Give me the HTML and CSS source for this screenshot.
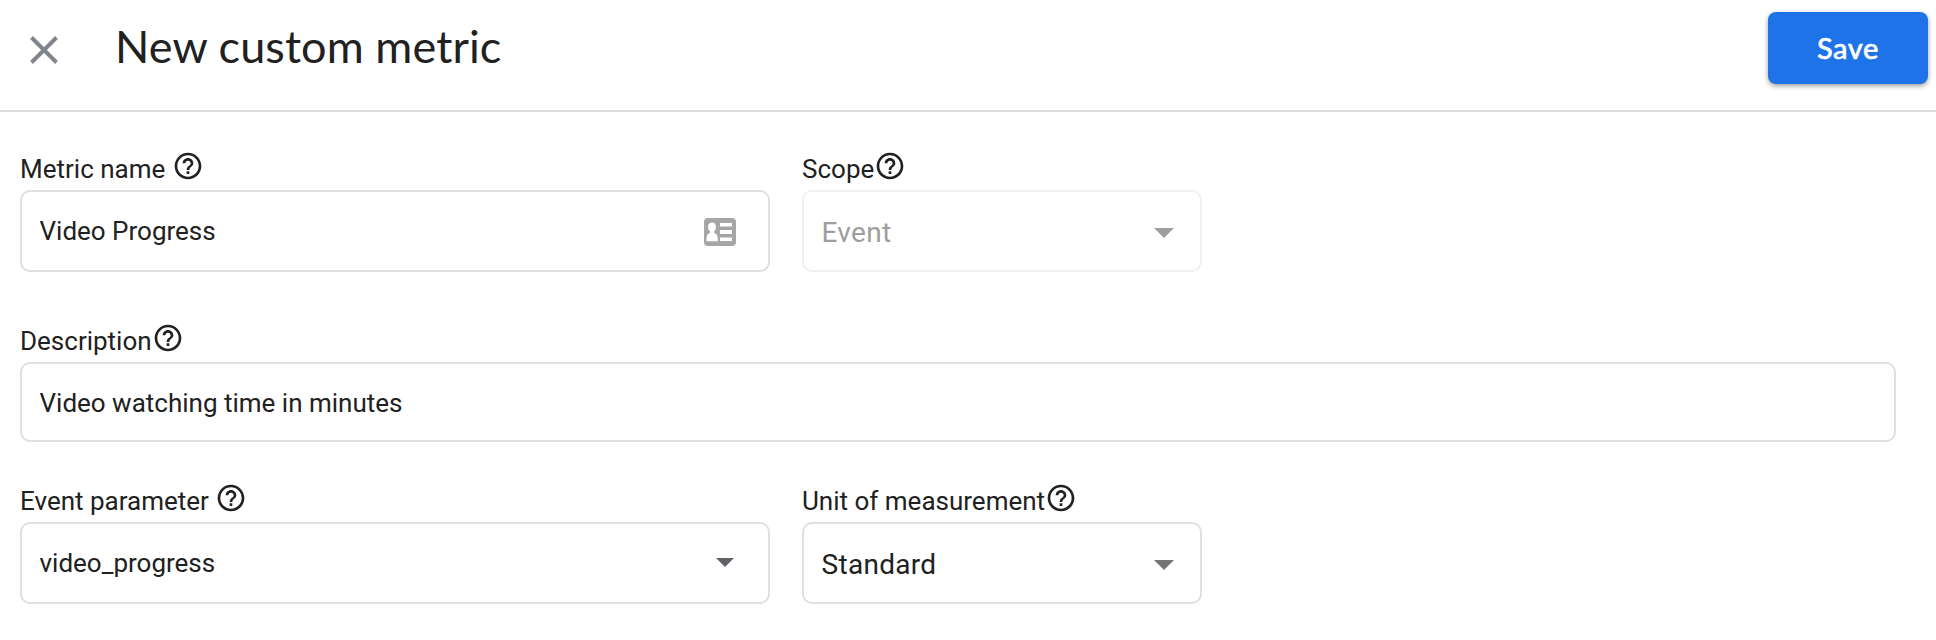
FILE: index.html
```html
<!DOCTYPE html>
<html lang="en">
<head>
<meta charset="utf-8">
<title>New custom metric</title>
<link rel="stylesheet" href="styles.css">
</head>
<body>
<svg class="defs" width="0" height="0">
  <symbol id="help" viewBox="0 0 24 24"><path d="M11 18h2v-2h-2v2zm1-16C6.48 2 2 6.48 2 12s4.480 10 10 10 10-4.480 10-10S17.520 2 12 2zm0 18c-4.410 0-8-3.590-8-8s3.590-8 8-8 8 3.590 8 8-3.590 8-8 8zm0-14c-2.210 0-4 1.790-4 4h2c0-1.100.9-2 2-2s2 .9 2 2c0 2-3 1.750-3 5h2c0-2.250 3-2.500 3-5 0-2.210-1.790-4-4-4z"/></symbol>
</svg>
<header class="header">
  <svg class="close" viewBox="0 0 28 28"><path d="M1.500 1.500l25 25M26.500 1.500l-25 25"/></svg>
  <h1 class="title">New custom metric</h1>
  <button class="save">Save</button>
</header>
<main class="form">
  <div class="row row-first">
    <div class="field wide">
      <div class="label spaced"><span>Metric name</span><svg class="help"><use href="#help"/></svg></div>
      <div class="box"><span class="value">Video Progress</span>
        <svg class="card" viewBox="0 0 32 28"><rect width="32" height="28" rx="4" fill="#a6a6a6"/><path fill="#fff" d="M8 4.500c2.500 0 4 1.900 4 4.500 0 2-.8 3.600-2 4.600v1.200c2.500.9 3.700 2.700 3.700 5.400v3H2.500v-3c0-2.700 1.200-4.500 3.700-5.400v-1.200C5 12.600 4 11 4 9c0-2.600 1.500-4.500 4-4.500zM16 5h12v3.500H16zM16 12h12v4H16zM16 19.500h12V23H16z"/></svg>
      </div>
    </div>
    <div class="field narrow">
      <div class="label"><span>Scope</span><svg class="help"><use href="#help"/></svg></div>
      <div class="box disabled"><span class="value select">Event</span><svg class="arrow" viewBox="0 0 20 10"><path d="M0 0h20L10 10z"/></svg></div>
    </div>
  </div>
  <div class="row row-description">
    <div class="field full">
      <div class="label"><span>Description</span><svg class="help"><use href="#help"/></svg></div>
      <div class="box short"><span class="value">Video watching time in minutes</span></div>
    </div>
  </div>
  <div class="row">
    <div class="field wide">
      <div class="label spaced"><span>Event parameter</span><svg class="help"><use href="#help"/></svg></div>
      <div class="box"><span class="value">video_progress</span><svg class="arrow small" viewBox="0 0 20 10"><path d="M0 0h20L10 10z"/></svg></div>
    </div>
    <div class="field narrow">
      <div class="label"><span>Unit of measurement</span><svg class="help"><use href="#help"/></svg></div>
      <div class="box"><span class="value select">Standard</span><svg class="arrow" viewBox="0 0 20 10"><path d="M0 0h20L10 10z"/></svg></div>
    </div>
  </div>
</main>
</body>
</html>
```
FILE: styles.css
```css
* { box-sizing: border-box; }
body { margin: 0; background: #fff; color: #212121; font-family: Roboto, sans-serif; font-size: 26px; }
.defs { display: block; }
.header { display: flex; align-items: flex-start; height: 112px; border-bottom: 2px solid #dadce0; padding: 12px 8px 0 30px; }
.close { width: 28px; height: 28px; margin-top: 24px; fill: none; stroke: #80868b; stroke-width: 3.9; }
.title { margin: 7px 0 0 57px; font: 400 45px/54px Lato, sans-serif; letter-spacing: 0.1px; white-space: nowrap; }
.save { width: 160px; height: 72px; margin-left: auto; padding: 0; border: 0; border-radius: 8px; background: #1f73e8; color: #fff; font: 500 29px/72px Lato, sans-serif; letter-spacing: .6px; -webkit-text-stroke: .5px #fff; box-shadow: 0 2px 5px rgba(0, 0, 0, .4); }
.form { padding: 36px 20px 0; }
.row { display: flex; gap: 32px; height: 160px; }
.row-first { height: 172px; }
.wide { width: 750px; }
.narrow { width: 400px; }
.full { width: 1876px; }
.label { display: flex; height: 42px; line-height: 42px; gap: 0; white-space: nowrap; }
.spaced { gap: 6.500px; }
.help { width: 32px; height: 32px; margin-top: 2px; fill: #212121; }
.box { display: flex; align-items: flex-start; height: 82px; padding: 0 32px 0 17.500px; border: 2px solid #e0e0e0; border-radius: 10px; }
.short { height: 80px; }
.value { line-height: 78px; }
.select { font-size: 28px; line-height: 82px; letter-spacing: .3px; }
.card { width: 32px; height: 28px; margin: 26px 0 0 auto; }
.arrow { width: 20px; height: 10px; margin: 36px -6px 0 auto; fill: #757575; }
.small { width: 18px; height: 9px; margin: 34px 2px 0 auto; fill: #5f6368; }
.disabled { border-color: #f0f0f0; color: #9e9e9e; }
.disabled .arrow { fill: #9e9e9e; }
```
